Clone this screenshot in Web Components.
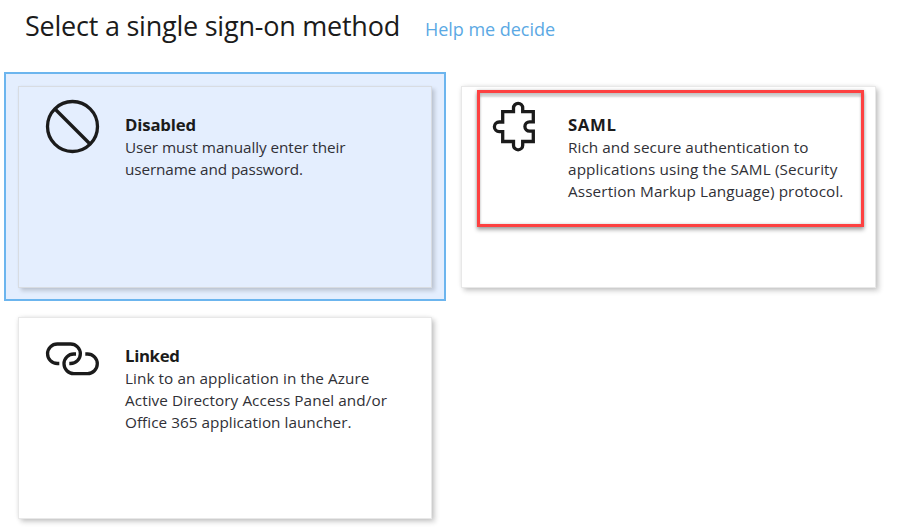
<!DOCTYPE html>
<html lang="en"><head><meta charset="utf-8"><title>Single sign-on</title>
<style>
body{margin:0;background:#fff;color:#1b1b1b;font-family:"Open Sans","Noto Sans",sans-serif}
</style></head><body>
<sso-page></sso-page>
<script>
// One line of text, tracked so that it spans the width given in its "fit" attribute.
class FitText extends HTMLElement{
  connectedCallback(){
    const r=this.attachShadow({mode:'open'});
    r.innerHTML='<style>:host{display:block;white-space:nowrap}span{display:inline-block}</style><span></span>';
    const s=r.querySelector('span');
    s.textContent=this.getAttribute('text');
    const n=s.textContent.length;
    s.style.letterSpacing=((+this.getAttribute('fit')-s.getBoundingClientRect().width)/n).toFixed(3)+'px';
  }
}
class SsoIcon extends HTMLElement{
  connectedCallback(){
    const shapes={
      disabled:'<circle cx="27.5" cy="27.5" r="25"/><path d="M10 10 45 45"/>',
      linked:'<path d="M14.3 33.5H12.3a9.75 9.75 0 0 1 0-19.5H25.6a9.75 9.75 0 0 1 0 19.5H24.3M31 24H28.8a9.8 9.8 0 0 0 0 19.6H42.5a9.8 9.8 0 0 0 0-19.6H40.3"/>',
      saml:'<path d="M14.7 12.7H25.5V9a4.6 4.6 0 0 1 9.2 0V12.7H45.3V22.8H41.6a4.7 4.7 0 0 0 0 9.4H45.3V42.5H34.7V46.2a4.6 4.6 0 0 1-9.2 0V42.5H14.7V32.6H11.2a4.8 4.8 0 0 1 0-9.6H14.7Z"/>'};
    this.attachShadow({mode:'open'}).innerHTML=`<style>:host{display:block;width:56px;height:56px}svg{display:block}</style>
    <svg width="56" height="56" viewBox="0 0 56 56" fill="none" stroke="#1b1b1b" stroke-width="3.3">${shapes[this.getAttribute('name')]}</svg>`;
  }
}
class SsoCard extends HTMLElement{
  connectedCallback(){
    this.attachShadow({mode:'open'}).innerHTML=`<style>
    :host{display:block;box-sizing:border-box;height:229px;border:2px solid transparent;padding:13px 13px 12px}
    :host([selected]){background:#e4eefe;border-color:#6cb5ee}
    .card{position:relative;box-sizing:border-box;height:100%;display:flex;gap:24px;padding:12px 0 0 26px;background:#fff;
      box-shadow:0 0 0 1px #e8e8e8,0 0 5px rgba(0,0,0,.14),3px 3px 5px 1px rgba(0,0,0,.19)}
    :host([selected]) .card{background:#e4eefe;box-shadow:0 0 0 1px #d8dce2,0 0 3px rgba(0,0,0,.1),3px 3px 4px 1px rgba(0,0,0,.16)}
    .body{padding-top:13.5px}
    ::slotted([slot=title]){font-size:16.8px;font-weight:700;line-height:23px;}
    ::slotted(:not([slot])){font-size:15.3px;line-height:22px;color:#303036}
    .mark{display:none}
    :host([marked]) .mark{display:block;position:absolute;box-sizing:border-box;left:15px;top:3px;width:387px;height:137px;border:3px solid #fd4141;
      box-shadow:0 3px 4px rgba(0,0,0,.32),0 0 3px rgba(0,0,0,.18),inset 0 4px 2px rgba(0,0,0,.17),inset 0 0 3px rgba(0,0,0,.2)}
    </style><div class="card"><sso-icon name="${this.getAttribute('icon')}"></sso-icon>
    <div class="body"><slot name="title"></slot><slot></slot></div><div class="mark"></div></div>`;
  }
}
class SsoPage extends HTMLElement{
  connectedCallback(){
    this.attachShadow({mode:'open'}).innerHTML=`<style>
    :host{display:block;width:903px;height:530px;overflow:hidden}
    header{height:72px;box-sizing:border-box;display:flex;align-items:baseline;gap:25px;padding:7px 0 0 25px}
    h1{margin:0;font-size:27px;line-height:38px;font-weight:400}
    a{font-size:18px;line-height:26px;color:#5ba9e4;text-decoration:none}
    main{display:grid;grid-template-columns:442px 443px;column-gap:1px;row-gap:2px;padding-left:4px}
    </style>
    <header><h1><fit-text text="Select a single sign-on method" fit="375"></fit-text></h1><a><fit-text text="Help me decide" fit="130"></fit-text></a></header>
    <main>
    <sso-card icon="disabled" selected><fit-text slot="title" text="Disabled" fit="71"></fit-text>
      <fit-text text="User must manually enter their" fit="220.5"></fit-text><fit-text text="username and password." fit="178"></fit-text></sso-card>
    <sso-card icon="saml" marked><fit-text slot="title" text="SAML" fit="48.5"></fit-text>
      <fit-text text="Rich and secure authentication to" fit="240.5"></fit-text><fit-text text="applications using the SAML (Security" fit="269.5"></fit-text><fit-text text="Assertion Markup Language) protocol." fit="275.5"></fit-text></sso-card>
    <sso-card icon="linked"><fit-text slot="title" text="Linked" fit="54.5"></fit-text>
      <fit-text text="Link to an application in the Azure" fit="244.5"></fit-text><fit-text text="Active Directory Access Panel and/or" fit="262"></fit-text><fit-text text="Office 365 application launcher." fit="226.5"></fit-text></sso-card>
    </main>`;
  }
}
// Containers come first so that each line of text is measured in its final style.
customElements.define('sso-page',SsoPage);
customElements.define('sso-card',SsoCard);
customElements.define('sso-icon',SsoIcon);
customElements.define('fit-text',FitText);
</script></body></html>
